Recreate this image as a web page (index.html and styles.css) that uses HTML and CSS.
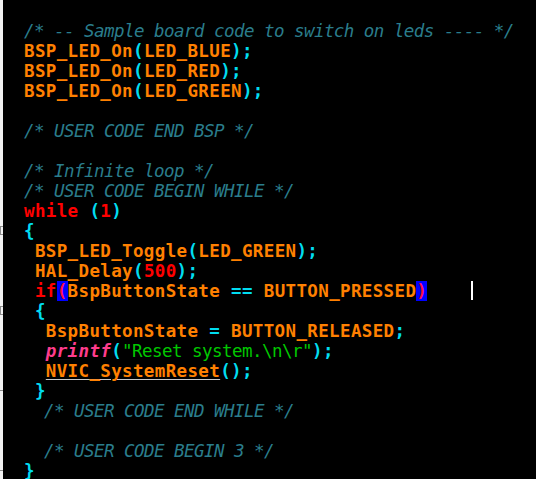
FILE: index.html
```html
<!DOCTYPE html>
<html lang="en">
<head>
  <meta charset="UTF-8" />
  <meta name="viewport" content="width=device-width, initial-scale=1.0" />
  <title>main.c - editor</title>
  <link rel="stylesheet" href="styles.css">
</head>
<body>

  <!-- Editor -->
  <div class="editor">

    <!-- Fold gutter -->
    <div class="gutter">
      <div class="g"></div><div class="g"></div><div class="g"></div><div class="g"></div>
      <div class="g"></div><div class="g"></div><div class="g"></div><div class="g"></div>
      <div class="g"></div><div class="g"></div>
      <div class="g"><span class="fold"></span></div>
      <div class="g"></div><div class="g"></div><div class="g"></div>
      <div class="g"><span class="fold"></span></div>
      <div class="g"></div><div class="g"></div><div class="g"></div>
      <div class="g"><span class="fold-end"></span></div>
      <div class="g"></div><div class="g"></div><div class="g"></div>
      <div class="g"><span class="fold-end"></span></div>
    </div>

    <!-- Source -->
    <div class="code">
      <div class="line"><span class="c">/* -- Sample board code to switch on leds ---- */</span></div>
      <div class="line">BSP_LED_On<span class="p">(</span>LED_BLUE<span class="p">);</span></div>
      <div class="line">BSP_LED_On<span class="p">(</span>LED_RED<span class="p">);</span></div>
      <div class="line">BSP_LED_On<span class="p">(</span>LED_GREEN<span class="p">);</span></div>
      <div class="line"></div>
      <div class="line"><span class="c">/* USER CODE END BSP */</span></div>
      <div class="line"></div>
      <div class="line"><span class="c">/* Infinite loop */</span></div>
      <div class="line"><span class="c">/* USER CODE BEGIN WHILE */</span></div>
      <div class="line"><span class="k">while</span> <span class="p">(</span><span class="n">1</span><span class="p">)</span></div>
      <div class="line"><span class="p">{</span></div>
      <div class="line"> BSP_LED_Toggle<span class="p">(</span>LED_GREEN<span class="p">);</span></div>
      <div class="line"> HAL_Delay<span class="p">(</span><span class="n">500</span><span class="p">);</span></div>
      <div class="line"> <span class="k">if</span><span class="match">(</span>BspButtonState <span class="p">==</span> BUTTON_PRESSED<span class="match">)</span>    <span class="cursor"></span></div>
      <div class="line"> <span class="p">{</span></div>
      <div class="line">  BspButtonState <span class="p">=</span> BUTTON_RELEASED<span class="p">;</span></div>
      <div class="line">  <span class="fn">printf</span><span class="p">(</span><span class="s">"Reset system.\n\r"</span><span class="p">);</span></div>
      <div class="line">  <span class="link">NVIC_SystemReset</span><span class="p">();</span></div>
      <div class="line"> <span class="p">}</span></div>
      <div class="line"><span class="sp">  </span><span class="c">/* USER CODE END WHILE */</span></div>
      <div class="line"></div>
      <div class="line"><span class="sp">  </span><span class="c">/* USER CODE BEGIN 3 */</span></div>
      <div class="line"><span class="p">}</span></div>
    </div>
  </div>

</body>
</html>
```

FILE: styles.css
```css
/* Reset & Base */
* {
  margin: 0;
  padding: 0;
  box-sizing: border-box;
}
html, body {
  height: 100%;
  background: #000;
  overflow: hidden;
}

/* Editor */
.editor {
  display: flex;
  height: 100%;
}

/* Fold gutter */
.gutter {
  width: 3px;
  flex: none;
  background: #f2f2f2;
  padding-top: 20px;
}
.g {
  height: 20px;
  position: relative;
}
.fold {
  position: absolute;
  top: 6px;
  left: 0;
  width: 3px;
  height: 9px;
  border: 1px solid #8c8c8c;
  border-right: none;
}
.fold-end {
  position: absolute;
  top: 10px;
  left: 0;
  width: 3px;
  height: 1px;
  background: #8c8c8c;
}

/* Source text */
.code {
  flex: 1;
  padding: 21px 0 0 21px;
  font-family: "DejaVu Sans Mono", monospace;
  font-size: 17.5px;
  line-height: 20px;
  font-weight: bold;
  letter-spacing: 0.36px;
  color: #ff8000;
}
.line {
  height: 20px;
  white-space: pre;
}

.c {
  color: #2a7d8c;
  font-style: italic;
  font-weight: normal;
  letter-spacing: -0.54px;
}
.sp {
  letter-spacing: -0.54px;
}
.p {
  color: #00dcf0;
}
.k,
.n {
  color: #ff0000;
}
.fn {
  color: #ff3c8c;
  font-style: italic;
}
.s {
  color: #00c800;
  font-weight: normal;
  letter-spacing: -0.54px;
}
.link {
  text-decoration: underline;
  text-decoration-color: #c8c8c8;
  text-decoration-thickness: 1px;
  text-underline-offset: 2px;
}
.match {
  color: #ff1040;
  background: #0000ff;
}
.cursor {
  display: inline-block;
  width: 2px;
  height: 19px;
  background: #fff;
  vertical-align: top;
}
```
